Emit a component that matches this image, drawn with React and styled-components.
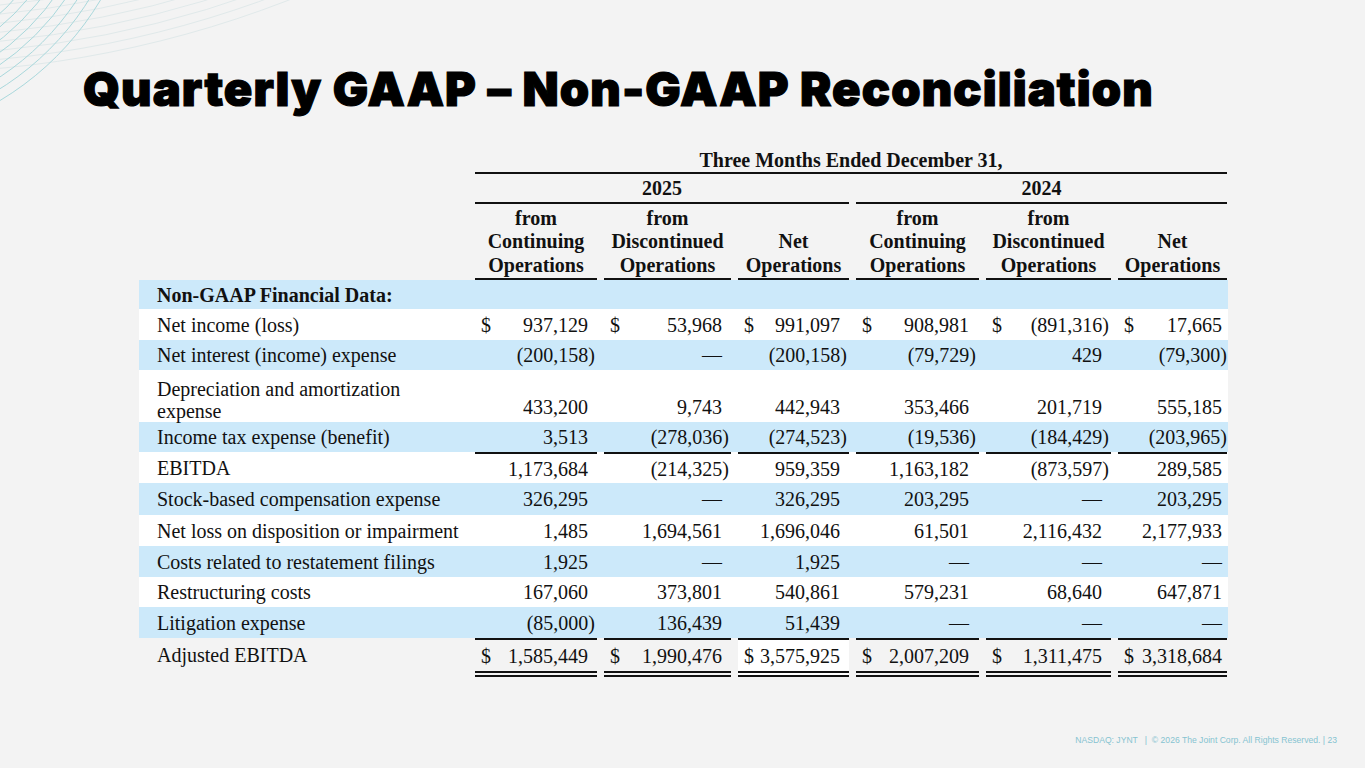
import styled, { createGlobalStyle } from 'styled-components';

const GlobalStyle = createGlobalStyle`
  html, body {
    margin: 0;
    padding: 0;
    background: #f3f3f3;
  }
`;

const COLS = '329px 122px 127px 111px 123px 125px 109px';

const Page = styled.div`
  position: relative;
  width: 1365px;
  height: 768px;
  overflow: hidden;
  background: #f3f3f3;
  display: flex;
  flex-direction: column;
`;

const Decoration = styled.svg`
  position: absolute;
  left: 0;
  top: 0;
  pointer-events: none;
`;

const Title = styled.h1`
  position: relative;
  margin: 61px 0 0 83px;
  height: 56px;
  font-family: 'Inter', 'Liberation Sans', sans-serif;
  font-weight: 900;
  font-size: 47px;
  line-height: 56px;
  letter-spacing: 1.1px;
  -webkit-text-stroke: 1.2px #000;
  color: #000;
  white-space: nowrap;
`;

const Table = styled.div`
  position: relative;
  margin: 31px 0 0 139px;
  width: 1089px;
  font-family: 'Liberation Serif', 'Times New Roman', serif;
  font-size: 20px;
  color: #111;
`;

const Row = styled.div`
  display: grid;
  grid-template-columns: ${COLS};
  column-gap: 7px;
  height: ${(p) => p.$h}px;
  background: ${(p) => (p.$shade === 'blue' ? '#cce9fa' : p.$shade === 'white' ? '#ffffff' : 'transparent')};
`;

const SpanHead = styled.div`
  grid-column: ${(p) => p.$cols};
  border-bottom: 2px solid #111;
  text-align: center;
  font-weight: 700;
  line-height: ${(p) => p.$lh}px;
  height: ${(p) => p.$lh}px;
  align-self: end;
  white-space: nowrap;
`;

const ColHead = styled.div`
  display: flex;
  flex-direction: column;
  justify-content: flex-end;
  text-align: center;
  font-weight: 700;
  line-height: 23.5px;
  padding-bottom: 1px;
  border-bottom: 2px solid #111;
  white-space: nowrap;
`;

const Label = styled.div`
  padding-left: 18px;
  display: flex;
  flex-direction: column;
  justify-content: ${(p) => (p.$tall ? 'flex-end' : 'center')};
  padding-bottom: 0;
  line-height: ${(p) => (p.$tall ? 22 : 24)}px;
  font-weight: ${(p) => (p.$bold ? 700 : 400)};
  white-space: nowrap;
`;

const Amount = styled.div`
  display: flex;
  justify-content: space-between;
  align-items: ${(p) => (p.$tall ? 'flex-end' : 'center')};
  padding: 0 ${(p) => p.$pr}px ${(p) => (p.$tall ? 3 : 0)}px 6px;
  line-height: 24px;
  white-space: nowrap;
  background: ${(p) => (p.$white ? '#ffffff' : 'transparent')};
  border-top: ${(p) => (p.$ruleTop ? '2px solid #111' : 'none')};
  border-bottom: ${(p) => (p.$double ? '6px double #111' : 'none')};
  margin-bottom: ${(p) => (p.$double ? -6 : 0)}px;
`;

const Footer = styled.div`
  margin-top: auto;
  align-self: flex-end;
  padding: 0 28px 23px 0;
  font-family: 'Liberation Sans', Arial, sans-serif;
  font-size: 8.6px;
  color: #86c3d1;
  white-space: pre;
`;

const PAD = [9, 9, 9, 10, 9, 5];

const rows = [
  { label: 'Net income (loss)', vals: ['937,129', '53,968', '991,097', '908,981', '(891,316)', '17,665'], dollar: true, shade: 'white', h: 31 },
  { label: 'Net interest (income) expense', vals: ['(200,158)', '—', '(200,158)', '(79,729)', '429', '(79,300)'], shade: 'blue', h: 30 },
  { label: ['Depreciation and amortization', 'expense'], vals: ['433,200', '9,743', '442,943', '353,466', '201,719', '555,185'], shade: 'white', h: 52, tall: true },
  { label: 'Income tax expense (benefit)', vals: ['3,513', '(278,036)', '(274,523)', '(19,536)', '(184,429)', '(203,965)'], shade: 'blue', h: 30 },
  { label: 'EBITDA', vals: ['1,173,684', '(214,325)', '959,359', '1,163,182', '(873,597)', '289,585'], shade: 'white', h: 31, ruleTop: true },
  { label: 'Stock-based compensation expense', vals: ['326,295', '—', '326,295', '203,295', '—', '203,295'], shade: 'blue', h: 32 },
  { label: 'Net loss on disposition or impairment', vals: ['1,485', '1,694,561', '1,696,046', '61,501', '2,116,432', '2,177,933'], shade: 'white', h: 31 },
  { label: 'Costs related to restatement filings', vals: ['1,925', '—', '1,925', '—', '—', '—'], shade: 'blue', h: 31 },
  { label: 'Restructuring costs', vals: ['167,060', '373,801', '540,861', '579,231', '68,640', '647,871'], shade: 'white', h: 30 },
  { label: 'Litigation expense', vals: ['(85,000)', '136,439', '51,439', '—', '—', '—'], shade: 'blue', h: 31 },
  { label: 'Adjusted EBITDA', vals: ['1,585,449', '1,990,476', '3,575,925', '2,007,209', '1,311,475', '3,318,684'], dollar: true, shade: 'none', h: 33, ruleTop: true, double: true, whiteCell: 2 },
];

const headers = [
  ['from', 'Continuing', 'Operations'],
  ['from', 'Discontinued', 'Operations'],
  ['Net', 'Operations'],
  ['from', 'Continuing', 'Operations'],
  ['from', 'Discontinued', 'Operations'],
  ['Net', 'Operations'],
];

const Arcs = () => {
  const teal = [];
  for (let r = 212; r <= 296; r += 10) teal.push(r);
  const grey = [];
  for (let r = 1010; r <= 1080; r += 9) grey.push(r);
  return (
    <Decoration width="420" height="160" viewBox="0 0 420 160">
      {grey.map((r) => (
        <circle key={`g${r}`} cx="-100" cy="-1000" r={r} fill="none" stroke="#e0e9ea" strokeWidth="1" />
      ))}
      {teal.map((r) => (
        <circle key={`t${r}`} cx="-150" cy="-150" r={r} fill="none" stroke="#a9d8dc" strokeWidth="1" />
      ))}
    </Decoration>
  );
};

const DataRow = ({ row }) => (
  <Row $shade={row.shade} $h={row.h}>
    <Label $tall={row.tall}>
      {Array.isArray(row.label) ? row.label.map((l) => <span key={l}>{l}</span>) : row.label}
    </Label>
    {row.vals.map((v, i) => {
      const neg = v.endsWith(')');
      return (
        <Amount
          key={i}
          $pr={PAD[i] - (neg ? 7 : 0)}
          $tall={row.tall}
          $ruleTop={row.ruleTop}
          $double={row.double}
          $white={row.whiteCell === i}
        >
          <span>{row.dollar ? '$' : ''}</span>
          <span>{v}</span>
        </Amount>
      );
    })}
  </Row>
);

export default function App() {
  return (
    <Page>
      <GlobalStyle />
      <Arcs />
      <Title>Quarterly GAAP – Non-GAAP Reconciliation</Title>
      <Table>
        <Row $h={26}>
          <SpanHead $cols="2 / 8" $lh={24}>Three Months Ended December 31,</SpanHead>
        </Row>
        <Row $h={30}>
          <SpanHead $cols="2 / 5" $lh={28}>2025</SpanHead>
          <SpanHead $cols="5 / 8" $lh={28}>2024</SpanHead>
        </Row>
        <Row $h={76}>
          <div />
          {headers.map((lines, i) => (
            <ColHead key={i}>
              {lines.map((l) => (
                <span key={l}>{l}</span>
              ))}
            </ColHead>
          ))}
        </Row>
        <Row $shade="blue" $h={29}>
          <Label $bold>Non-GAAP Financial Data:</Label>
        </Row>
        {rows.map((row) => (
          <DataRow key={row.label} row={row} />
        ))}
      </Table>
      <Footer>{'NASDAQ: JYNT   |  © 2026 The Joint Corp. All Rights Reserved. | 23'}</Footer>
    </Page>
  );
}
